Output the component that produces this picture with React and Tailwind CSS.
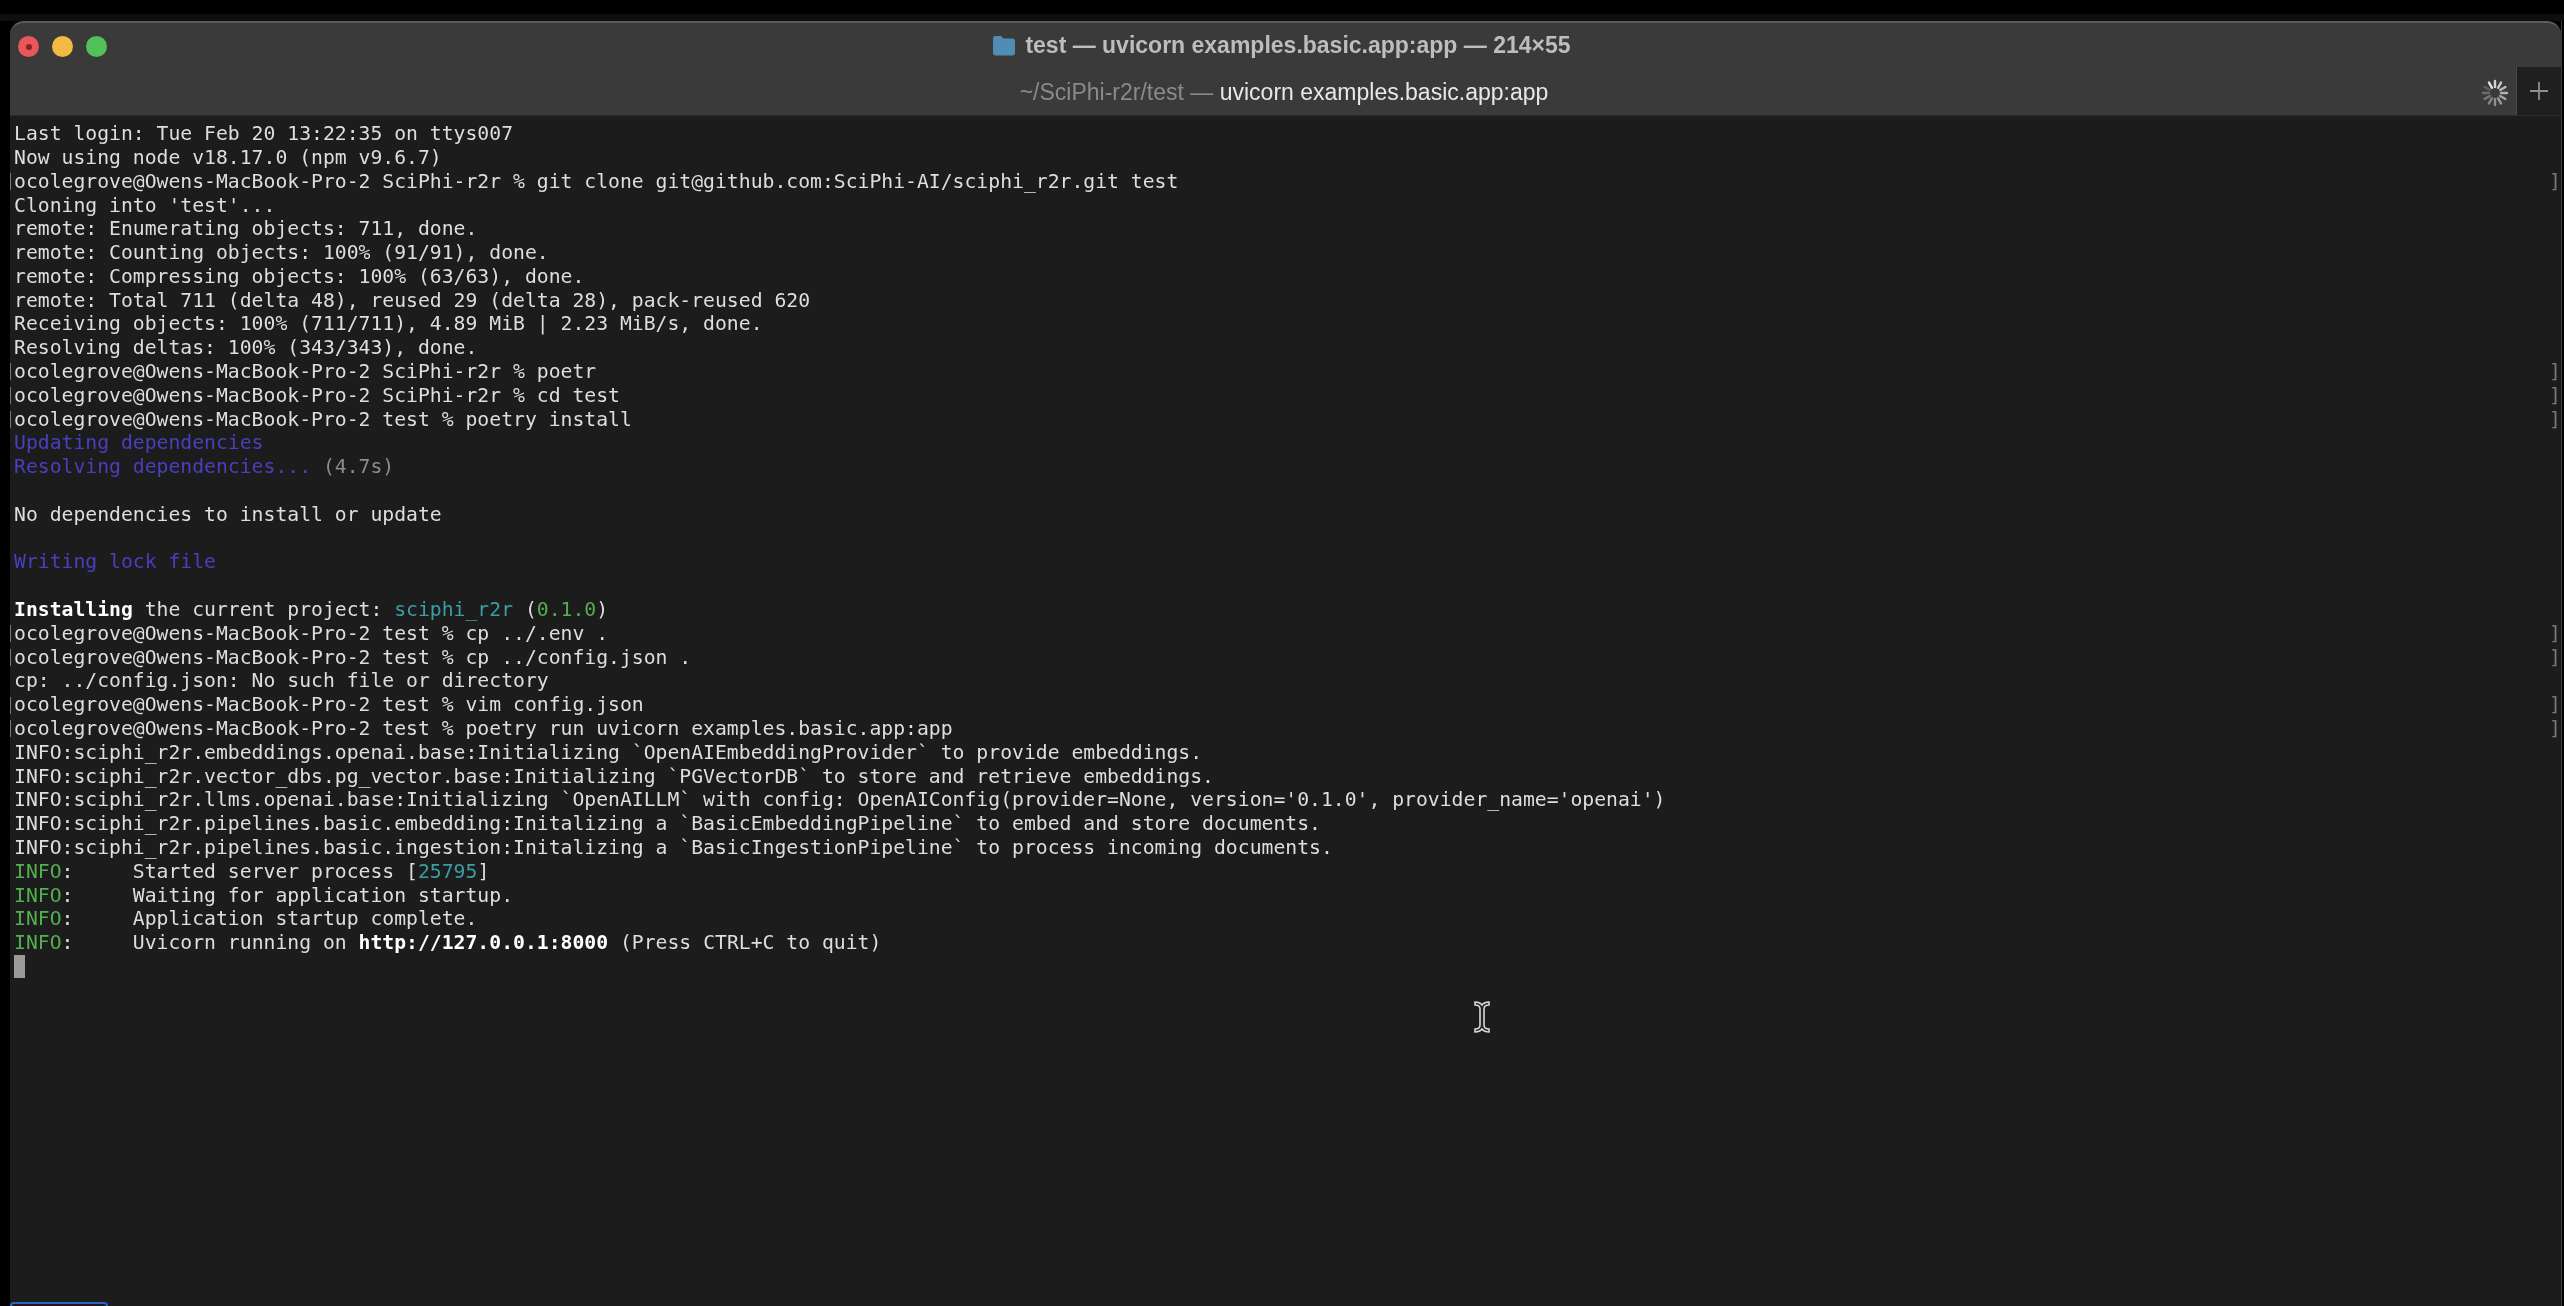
const P1 = 'ocolegrove@Owens-MacBook-Pro-2 SciPhi-r2r % ';
const P2 = 'ocolegrove@Owens-MacBook-Pro-2 test % ';

const PURPLE = 'text-[#4a3fbd]';
const GREEN = 'text-[#52b04e]';
const CYAN = 'text-[#3a9ea5]';
const DIM = 'text-[#8c8c8c]';
const BOLD = 'font-bold text-white';

// each line: text or list of [text, class]; mark = prompt line with the little brackets
const LINES = [
    { t: 'Last login: Tue Feb 20 13:22:35 on ttys007' },
    { t: 'Now using node v18.17.0 (npm v9.6.7)' },
    { t: P1 + 'git clone git@github.com:SciPhi-AI/sciphi_r2r.git test', mark: true },
    { t: "Cloning into 'test'..." },
    { t: 'remote: Enumerating objects: 711, done.' },
    { t: 'remote: Counting objects: 100% (91/91), done.' },
    { t: 'remote: Compressing objects: 100% (63/63), done.' },
    { t: 'remote: Total 711 (delta 48), reused 29 (delta 28), pack-reused 620' },
    { t: 'Receiving objects: 100% (711/711), 4.89 MiB | 2.23 MiB/s, done.' },
    { t: 'Resolving deltas: 100% (343/343), done.' },
    { t: P1 + 'poetr', mark: true },
    { t: P1 + 'cd test', mark: true },
    { t: P2 + 'poetry install', mark: true },
    { s: [['Updating dependencies', PURPLE]] },
    { s: [['Resolving dependencies...', PURPLE], [' (4.7s)', DIM]] },
    { t: '' },
    { t: 'No dependencies to install or update' },
    { t: '' },
    { s: [['Writing lock file', PURPLE]] },
    { t: '' },
    { s: [['Installing', BOLD], [' the current project: ', ''], ['sciphi_r2r', CYAN], [' (', ''], ['0.1.0', GREEN], [')', '']] },
    { t: P2 + 'cp ../.env .', mark: true },
    { t: P2 + 'cp ../config.json .', mark: true },
    { t: 'cp: ../config.json: No such file or directory' },
    { t: P2 + 'vim config.json', mark: true },
    { t: P2 + 'poetry run uvicorn examples.basic.app:app', mark: true },
    { t: 'INFO:sciphi_r2r.embeddings.openai.base:Initializing `OpenAIEmbeddingProvider` to provide embeddings.' },
    { t: 'INFO:sciphi_r2r.vector_dbs.pg_vector.base:Initializing `PGVectorDB` to store and retrieve embeddings.' },
    { t: "INFO:sciphi_r2r.llms.openai.base:Initializing `OpenAILLM` with config: OpenAIConfig(provider=None, version='0.1.0', provider_name='openai')" },
    { t: 'INFO:sciphi_r2r.pipelines.basic.embedding:Initalizing a `BasicEmbeddingPipeline` to embed and store documents.' },
    { t: 'INFO:sciphi_r2r.pipelines.basic.ingestion:Initalizing a `BasicIngestionPipeline` to process incoming documents.' },
    { s: [['INFO', GREEN], [':     Started server process [', ''], ['25795', CYAN], [']', '']] },
    { s: [['INFO', GREEN], [':     Waiting for application startup.', '']] },
    { s: [['INFO', GREEN], [':     Application startup complete.', '']] },
    { s: [['INFO', GREEN], [':     Uvicorn running on ', ''], ['http://127.0.0.1:8000', BOLD], [' (Press CTRL+C to quit)', '']] },
];

function Spinner() {
    const spokes = [0, 30, 60, 90, 120, 150, 180, 210, 240, 270, 300, 330];
    return (
        <svg width="28" height="28" viewBox="0 0 28 28">
            {spokes.map((a, i) => (
                <line key={a} x1="14" y1="2" x2="14" y2="8" stroke="#e0e0e0" strokeWidth="2.4" strokeLinecap="round"
                    opacity={1 - ((i + 1) % 12) * 0.07} transform={`rotate(${a} 14 14)`} />
            ))}
        </svg>
    );
}

function Folder() {
    return (
        <svg width="24" height="21" viewBox="0 0 24 21">
            <path d="M1 3.5C1 2 2 1 3.5 1H9l2.5 2.5h9C22 3.5 23 4.500 23 6v12c0 1.500-1 2.500-2.500 2.500h-17C2 20.500 1 19.500 1 18z" fill="#4f8db5" />
        </svg>
    );
}

function IBeam() {
    return (
        <svg width="18" height="34" viewBox="0 0 18 34" fill="none">
            <path d="M2 2c3 0 5.500 1 7 3 1.500-2 4-3 7-3v3c-3 0-5 1.500-5 4v16c0 2.500 2 4 5 4v3c-3 0-5.500-1-7-3-1.500 2-4 3-7 3v-3c3 0 5-1.500 5-4V9c0-2.500-2-4-5-4z"
                fill="#222" stroke="#d8d8d8" strokeWidth="1.600" />
        </svg>
    );
}

function Line({ line }) {
    return (
        <div className="flex h-[23.8px] items-center">
            <div className="w-[4px] shrink-0">
                {line.mark && <div className="h-[17px] w-px bg-[#777]" />}
            </div>
            <div className="whitespace-pre">
                {line.s ? line.s.map(([txt, cls], i) => <span key={i} className={cls}>{txt}</span>) : line.t}
            </div>
            {line.mark && <div className="ml-auto text-[#777]">]</div>}
        </div>
    );
}

export default function App() {
    return (
        <div className="relative flex h-[1306px] w-full flex-col overflow-hidden bg-black pt-[14px]">
            <div className="h-[7px] shrink-0 bg-[#0e0e0e]" />

            <div className="ml-[10px] mr-[2px] flex min-h-0 flex-1 flex-col border-r border-[#3c3c3c]">
                {/* Title bar */}
                <div className="flex h-[95px] shrink-0 flex-col rounded-t-[14px] border-t-2 border-[#5c5c5c] bg-[#3a3a3a] font-['Liberation_Sans',sans-serif] blur-[0.6px]">
                    <div className="relative flex h-[45px] shrink-0 items-center justify-center pr-[8px]">
                        <div className="absolute left-[8px] top-[13px] flex gap-[13px]">
                            <div className="flex h-[21px] w-[21px] items-center justify-center rounded-full bg-[#e8585a]">
                                <div className="h-[6px] w-[6px] rounded-full bg-[#8c1f1f]" />
                            </div>
                            <div className="h-[21px] w-[21px] rounded-full bg-[#f4b942]" />
                            <div className="h-[21px] w-[21px] rounded-full bg-[#52c158]" />
                        </div>
                        <div className="flex items-center gap-[9px] text-[23px] font-bold text-[#bdbdbd]">
                            <Folder />
                            <span>test — uvicorn examples.basic.app:app — 214×55</span>
                        </div>
                    </div>
                    <div className="flex min-h-0 flex-1 items-center border-b border-[#2c2c2c] pt-[2px]">
                        <div className="flex-1 pl-[77px] text-center text-[23px]">
                            <span className="text-[#8a8a8a]">~/SciPhi-r2r/test — </span>
                            <span className="text-[#e8e8e8]">uvicorn examples.basic.app:app</span>
                        </div>
                        <div className="mr-[7px] flex items-center">
                            <Spinner />
                        </div>
                        <div className="flex h-[48px] w-[45px] items-center justify-center self-end border-l border-[#4a4a4a] bg-[#1f1f1f]">
                            <svg width="18" height="18" viewBox="0 0 18 18">
                                <path d="M9 0v18M0 9h18" stroke="#8f8f8f" strokeWidth="1.800" />
                            </svg>
                        </div>
                    </div>
                </div>

                {/* Terminal output */}
                <div className="min-h-0 flex-1 bg-[#1c1c1c] pt-[6px] font-['DejaVu_Sans_Mono','Liberation_Mono',monospace] text-[19.74px] text-[#dedede] blur-[0.6px]">
                    {LINES.map((l, i) => <Line key={i} line={l} />)}
                    <div className="flex h-[23.8px] items-center pl-[4px]">
                        <div className="h-[23px] w-[11px] bg-[#9a9a9a]" />
                    </div>
                </div>
            </div>

            {/* mouse pointer */}
            <div className="absolute left-[1473px] top-[1000px]">
                <IBeam />
            </div>

            {/* sliver of a selected thumbnail at the bottom edge */}
            <div className="absolute left-[10px] top-[1302px] h-[10px] w-[98px] rounded-t-[4px] border-2 border-[#2d63c8] bg-[#1a1a1a]" />
        </div>
    );
}
